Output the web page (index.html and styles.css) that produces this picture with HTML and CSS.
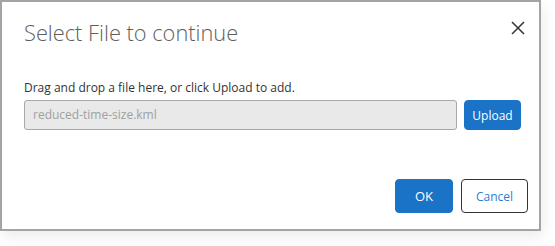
FILE: index.html
```html
<!DOCTYPE html>
<html>
<head>
<meta charset="utf-8">
<link rel="stylesheet" href="styles.css">
</head>
<body>
<div class="dialog">
  <div class="header">
    <h1 class="title">Select File to continue</h1>
    <button class="close" aria-label="Close">
      <svg width="14" height="14" viewBox="0 0 14 14"><path d="M1 1 L13 13 M13 1 L1 13" stroke="#333" stroke-width="1.5" fill="none"/></svg>
    </button>
  </div>
  <div class="body">
    <div class="label">Drag and drop a file here, or click Upload to add.</div>
    <div class="row">
      <div class="input">reduced-time-size.kml</div>
      <button class="btn primary upload">Upload</button>
    </div>
  </div>
  <div class="footer">
    <button class="btn primary ok">OK</button>
    <button class="btn secondary cancel">Cancel</button>
  </div>
</div>
</body>
</html>
```
FILE: styles.css
```css
html, body {
  margin: 0;
  padding: 0;
  background: #ffffff;
}
body {
  width: 555px;
  height: 246px;
  overflow: hidden;
  font-family: "Open Sans", "Noto Sans", sans-serif;
}
.dialog {
  box-sizing: border-box;
  width: 541px;
  height: 231px;
  border: 2px solid #a4a4a4;
  background: #fff;
  box-shadow: 2px 6px 14px rgba(0,0,0,0.08);
  display: flex;
  flex-direction: column;
}
.header {
  display: flex;
  justify-content: space-between;
  align-items: flex-start;
  padding: 16px 14px 0 22px;
}
.title {
  margin: 0;
  font-weight: 300;
  font-size: 21.8px;
  line-height: 30px;
  color: #5e5e5e;
}
.close {
  border: 0;
  background: none;
  padding: 0;
  margin-top: 3px;
  width: 14px;
  height: 14px;
  display: flex;
}
.body {
  padding: 31px 18px 0 22px;
}
.label {
  font-size: 12px;
  line-height: 17px;
  color: #333;
  margin-bottom: 4px;
}
.row {
  display: flex;
  gap: 7px;
}
.input {
  box-sizing: border-box;
  flex: 1;
  height: 30px;
  border: 1px solid #a8a8a8;
  border-radius: 3px;
  background: #e9e9e9;
  color: #a0a0a0;
  font-size: 12px;
  line-height: 28px;
  padding-left: 8px;
}
.btn {
  box-sizing: border-box;
  font-family: inherit;
  border-radius: 4px;
  font-size: 12px;
  padding: 0;
  cursor: pointer;
}
.primary {
  background: #1a73c6;
  border: 1px solid #1a73c6;
  color: #fff;
}
.upload {
  width: 57px;
  height: 30px;
}
.footer {
  margin-top: auto;
  display: flex;
  justify-content: flex-end;
  gap: 8px;
  padding: 0 11px 16px 0;
}
.ok {
  width: 58px;
  height: 34px;
  font-size: 13px;
}
.secondary {
  background: #fff;
  border: 1px solid #333;
  color: #2d7dd2;
}
.cancel {
  width: 67px;
  height: 34px;
}
```
